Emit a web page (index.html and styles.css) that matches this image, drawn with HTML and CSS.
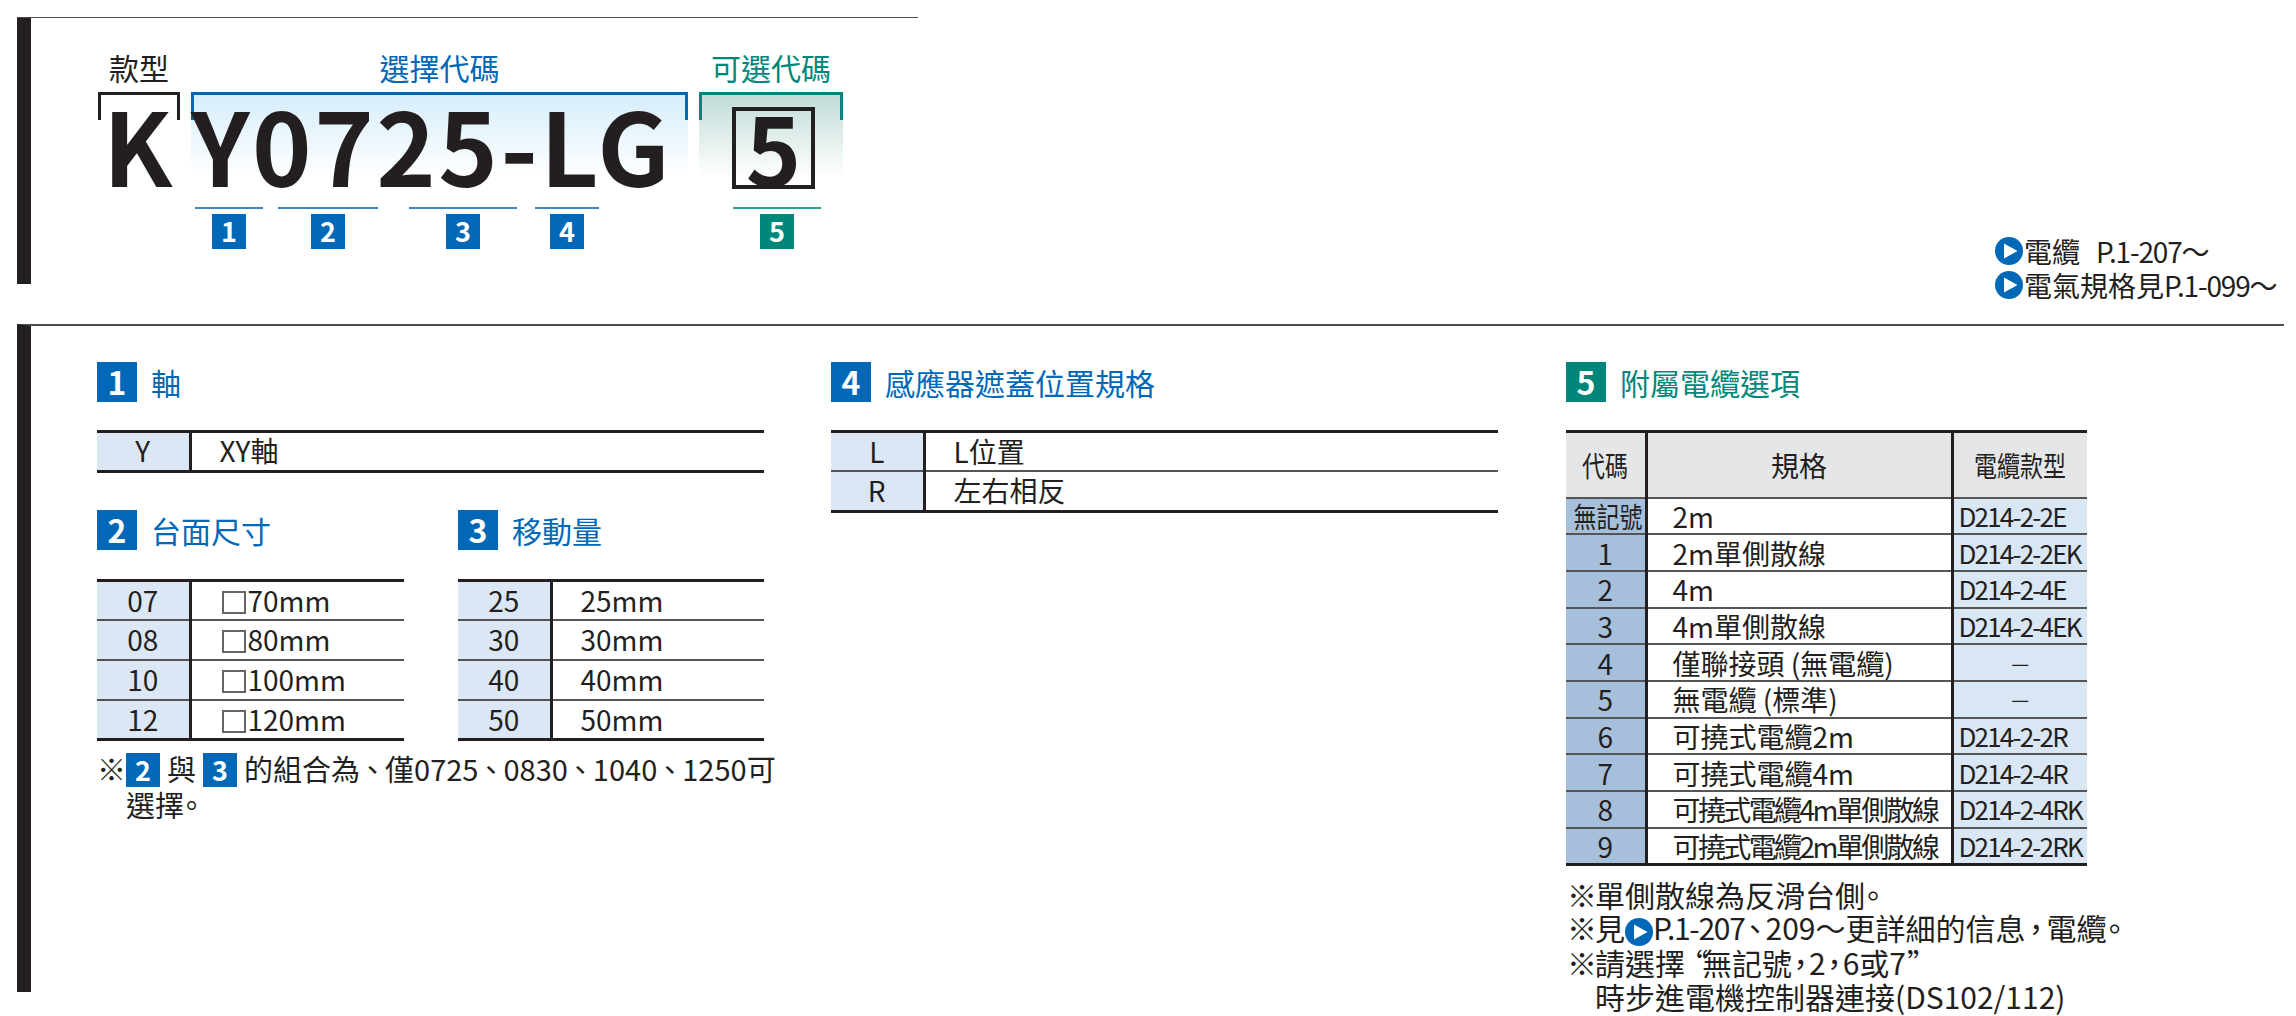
FILE: index.html
```html
<!DOCTYPE html>
<html lang="zh-Hant">
<head>
<meta charset="utf-8">
<title>KY0725-LG</title>
<link rel="stylesheet" href="styles.css">
</head>
<body>
<svg class="defs" width="0" height="0" aria-hidden="true"><symbol id="play" viewBox="0 0 28 28"><circle cx="14" cy="14" r="14" fill="#0068b7"/><path d="M9 6.5 22.5 14 9 21.5Z" fill="#fff"/></symbol></svg>
<div class="top-rule"></div>
<header class="top">
  <div class="code">
    <div class="groups">
      <div class="group group-k">
        <div class="label">款型</div>
        <div class="box box-k"><span class="big">K</span></div>
      </div>
      <div class="group group-sel">
        <div class="label label-blue">選擇代碼</div>
        <div class="box box-blue"><span class="big">Y0725-LG</span></div>
      </div>
      <div class="group group-opt">
        <div class="label label-green">可選代碼</div>
        <div class="box box-green"><span class="opt">5</span></div>
      </div>
    </div>
    <div class="marks">
      <div class="mark m1"><i></i><b class="badge">1</b></div>
      <div class="mark m2"><i></i><b class="badge">2</b></div>
      <div class="mark m3"><i></i><b class="badge">3</b></div>
      <div class="mark m4"><i></i><b class="badge">4</b></div>
      <div class="mark m5"><i></i><b class="badge badge-green">5</b></div>
    </div>
  </div>
  <div class="links">
    <div class="link"><svg class="play"><use href="#play"/></svg>電纜<span class="sp"></span><span class="ltn">P.1-207～</span></div>
    <div class="link"><svg class="play"><use href="#play"/></svg>電氣規格見<span class="ltn">P.1-099～</span></div>
  </div>
</header>
<main class="main">
  <section class="col col-a">
    <h2 class="head"><b class="num">1</b>軸</h2>
    <table class="spec spec-full">
      <tr><th>Y</th><td>XY軸</td></tr>
    </table>
    <div class="pair">
      <div class="half half-l">
        <h2 class="head head-low"><b class="num">2</b>台面尺寸</h2>
        <table class="spec">
          <tr><th>07</th><td><i class="sq"></i>70mm</td></tr>
          <tr><th>08</th><td><i class="sq"></i>80mm</td></tr>
          <tr><th>10</th><td><i class="sq"></i>100mm</td></tr>
          <tr><th>12</th><td><i class="sq"></i>120mm</td></tr>
        </table>
      </div>
      <div class="half half-r">
        <h2 class="head head-low"><b class="num">3</b>移動量</h2>
        <table class="spec">
          <tr><th>25</th><td>25mm</td></tr>
          <tr><th>30</th><td>30mm</td></tr>
          <tr><th>40</th><td>40mm</td></tr>
          <tr><th>50</th><td>50mm</td></tr>
        </table>
      </div>
    </div>
    <p class="note-a"><span class="kome">※</span><b class="inl">2</b><span class="w">與</span><b class="inl">3</b><span class="w2">的組合為<span class="pa">、</span>僅0725<span class="pa">、</span>0830<span class="pa">、</span>1040<span class="pa">、</span>1250可<br>選擇<span class="pe">。</span></span></p>
  </section>
  <section class="col col-b">
    <h2 class="head"><b class="num">4</b>感應器遮蓋位置規格</h2>
    <table class="spec spec-full">
      <tr><th>L</th><td>L位置</td></tr>
      <tr><th>R</th><td>左右相反</td></tr>
    </table>
  </section>
  <section class="col col-c">
    <h2 class="head head-green"><b class="num num-green">5</b>附屬電纜選項</h2>
    <table class="cable">
      <thead><tr><th class="c1"><span class="squeeze">代碼</span></th><th class="c2">規格</th><th class="c3"><span class="squeeze">電纜款型</span></th></tr></thead>
      <tbody>
        <tr><th><span class="squeeze">無記號</span></th><td>2m</td><td class="pn">D214-2-2E</td></tr>
        <tr><th>1</th><td>2m單側散線</td><td class="pn">D214-2-2EK</td></tr>
        <tr><th>2</th><td>4m</td><td class="pn">D214-2-4E</td></tr>
        <tr><th>3</th><td>4m單側散線</td><td class="pn">D214-2-4EK</td></tr>
        <tr><th>4</th><td>僅聯接頭 (無電纜)</td><td class="pn dash">—</td></tr>
        <tr><th>5</th><td>無電纜 (標準)</td><td class="pn dash">—</td></tr>
        <tr><th>6</th><td>可撓式電纜2m</td><td class="pn">D214-2-2R</td></tr>
        <tr><th>7</th><td>可撓式電纜4m</td><td class="pn">D214-2-4R</td></tr>
        <tr><th>8</th><td class="tight">可撓式電纜4m單側散線</td><td class="pn">D214-2-4RK</td></tr>
        <tr><th>9</th><td class="tight">可撓式電纜2m單側散線</td><td class="pn">D214-2-2RK</td></tr>
      </tbody>
    </table>
    <div class="notes">
      <p><span class="km">※</span>單側散線為反滑台側<span class="pe">。</span></p>
      <p><span class="km">※</span>見<svg class="play play-in"><use href="#play"/></svg><span class="nar">P.1-207</span><span class="pn2">、</span>209～更詳細的信息<span class="pn2">，</span>電纜<span class="pe">。</span></p>
      <p><span class="km">※</span>請選擇<span class="q">“</span>無記號<span class="pn3">，</span>2<span class="pn3">，</span>6或7<span class="qe">”</span></p>
      <p class="ind">時步進電機控制器連接(DS102/112)</p>
    </div>
  </section>
</main>
</body>
</html>
```
FILE: styles.css
```css
* { box-sizing: border-box; }
html, body { margin: 0; padding: 0; }
body {
  width: 2296px;
  height: 1016px;
  overflow: hidden;
  background: #fff;
  color: #231f20;
  font-family: "Noto Sans CJK TC", "Noto Sans", sans-serif;
  font-size: 28px;
  padding: 17px 12px 0 17px;
}
.defs { position: absolute; }
.top-rule { width: 901px; height: 1px; background: #4d4d4d; }
.top {
  display: flex;
  justify-content: space-between;
  height: 266px;
  border-left: 14px solid #231f20;
}
.code { padding: 33px 0 0 67px; }
.groups { display: flex; gap: 11px; }
.label { height: 41px; text-align: center; font-size: 30px; line-height: 33px; }
.label-blue { color: #0068b7; }
.label-green { color: #00877a; }
.group-k { width: 82px; }
.group-sel { width: 497px; }
.group-opt { width: 144px; }
.box { position: relative; height: 85px; border-top: 3px solid; }
.box::before {
  content: "";
  position: absolute;
  left: 0; right: 0; top: 0;
  height: 25px;
  border-left: 3px solid;
  border-right: 3px solid;
  border-color: inherit;
}
.box-k { border-color: #231f20; }
.box-blue { border-color: #0068b7; background: linear-gradient(#d6eefb, #fff); }
.box-green { border-color: #00877a; background: linear-gradient(#c1dcd8, #fff); }
.big {
  position: absolute;
  top: -12px;
  white-space: nowrap;
  font-weight: 700;
  font-size: 101px;
  line-height: 120px;
}
.box-k .big { left: 5px; }
.box-blue .big { left: 0; letter-spacing: 2.5px; }
.opt {
  position: absolute;
  left: 33px; top: 12px;
  width: 83px; height: 82px;
  border: 4px solid #231f20;
  text-align: center;
  font-weight: 700;
  font-size: 94px;
  line-height: 70px;
}
.marks { display: flex; margin: 30px 0 0 -67px; padding-left: 97px; }
.mark { display: flex; flex-direction: column; align-items: center; }
.mark i { display: block; width: 100%; height: 2px; background: #3f86c9; margin-bottom: 5px; }
.m1 { width: 68px; margin-left: 67px; }
.m2 { width: 100px; margin-left: 15px; }
.m3 { width: 108px; margin-left: 31px; }
.m4 { width: 64px; margin-left: 18px; }
.m5 { width: 88px; margin-left: 134px; }
.m5 i { background: #2ea08f; }
.badge {
  display: block;
  width: 34px; height: 35px;
  background: #0068b7;
  color: #fff;
  text-align: center;
  font-size: 27px;
  line-height: 34px;
  font-weight: 700;
}
.badge-green { background: #00877a; }
.links { padding: 216px 0 0 0; width: 289px; font-size: 28px; line-height: 34px; }
.link { display: flex; align-items: center; height: 34px; white-space: nowrap; }
.play { width: 28px; height: 28px; flex: none; margin-right: 1px; }
.sp { width: 16px; }
.ltn { letter-spacing: -1.2px; }
.main {
  display: flex;
  margin-top: 40px;
  height: 668px;
  border-left: 14px solid #231f20;
  border-top: 2px solid #4d4d4d;
  padding: 36px 0 0 66px;
}
.col-a { width: 667px; }
.col-b { width: 667px; margin-left: 67px; }
.col-c { width: 521px; margin-left: 68px; }
.head {
  display: flex;
  align-items: center;
  gap: 14px;
  height: 40px;
  margin: 0 0 28px;
  font-size: 30px;
  font-weight: 400;
  color: #0068b7;
}
.head-low { margin-bottom: 29px; }
.head-green { color: #00877a; }
.num {
  width: 40px; height: 40px;
  background: #0068b7;
  color: #fff;
  text-align: center;
  font-size: 32px;
  line-height: 38px;
  font-weight: 700;
}
.num-green { background: #00877a; }
.spec { width: 100%; border-collapse: collapse; table-layout: fixed; border-top: 3px solid #231f20; border-bottom: 3px solid #231f20; }
.spec tr { height: 39.85px; }
.spec tr + tr { border-top: 2px solid #555; }
.spec th { width: 93px; padding: 0 0 2px; background: #dbe7f4; font-weight: 400; border-right: 3px solid #231f20; line-height: 32px; }
.spec td { padding: 0 0 2px 28px; line-height: 32px; white-space: nowrap; }
.pair { display: flex; justify-content: space-between; margin-top: 37px; }
.half-l { width: 307px; }
.half-r { width: 306px; }
.sq { display: inline-block; width: 24px; height: 23px; border: 2px solid #666; vertical-align: -2px; margin: 0 2px; }
.note-a { margin: 10px 0 0; position: relative; padding-left: 29px; font-size: 29px; line-height: 34px; white-space: nowrap; width: 700px; }
.kome { position: absolute; left: 0; top: 0; }
.inl { display: inline-block; width: 34px; height: 34px; background: #0068b7; color: #fff; text-align: center; font-size: 27px; line-height: 33px; font-weight: 700; }
.w { margin: 0 7px; }
.w2 { margin-left: 7px; }
.pa { margin: 0 -2px; }
.pe { margin-left: -7px; }
.cable { width: 521px; border-collapse: collapse; table-layout: fixed; border-top: 3px solid #231f20; border-bottom: 3px solid #231f20; }
.cable thead tr { height: 66px; }
.cable tbody tr { height: 36.7px; border-top: 2px solid #555; }
.cable thead th { background: #e5e6e8; font-weight: 400; padding: 0; }
.c1 { width: 80px; }
.c2 { width: 306px; }
.c3 { width: 135px; }
.cable thead th, .cable tbody th, .cable td { border-right: 3px solid #231f20; }
.cable thead th:last-child, .cable td:last-child { border-right: 0; }
.cable tbody th { background: #a6bfdb; font-weight: 400; padding: 0; line-height: 32px; }
.cable td { padding: 0 0 0 25px; line-height: 32px; white-space: nowrap; }
.squeeze { display: inline-block; transform: scaleX(.82); white-space: nowrap; }
.cable td.pn { background: #d9e6f4; padding: 0 0 0 5px; font-size: 26px; letter-spacing: -1.8px; }
.cable td.dash { text-align: center; padding: 0; font-size: 20px; letter-spacing: 0; }
.cable td.tight { letter-spacing: -2.6px; }
.notes { margin-top: 12px; padding-left: 1px; font-size: 30px; line-height: 33.5px; white-space: nowrap; }
.notes p { margin: 0; }
.km { margin-right: -2px; }
.ind { padding-left: 28px; }
.play-in { vertical-align: -6px; margin-right: 0; }
.nar { letter-spacing: -1.3px; }
.pn2 { margin: 0 -4.5px; }
.pn3 { margin: 0 -6.5px; }
.q { margin: 0 -6.5px; }
.qe { margin-left: 1px; }
```
